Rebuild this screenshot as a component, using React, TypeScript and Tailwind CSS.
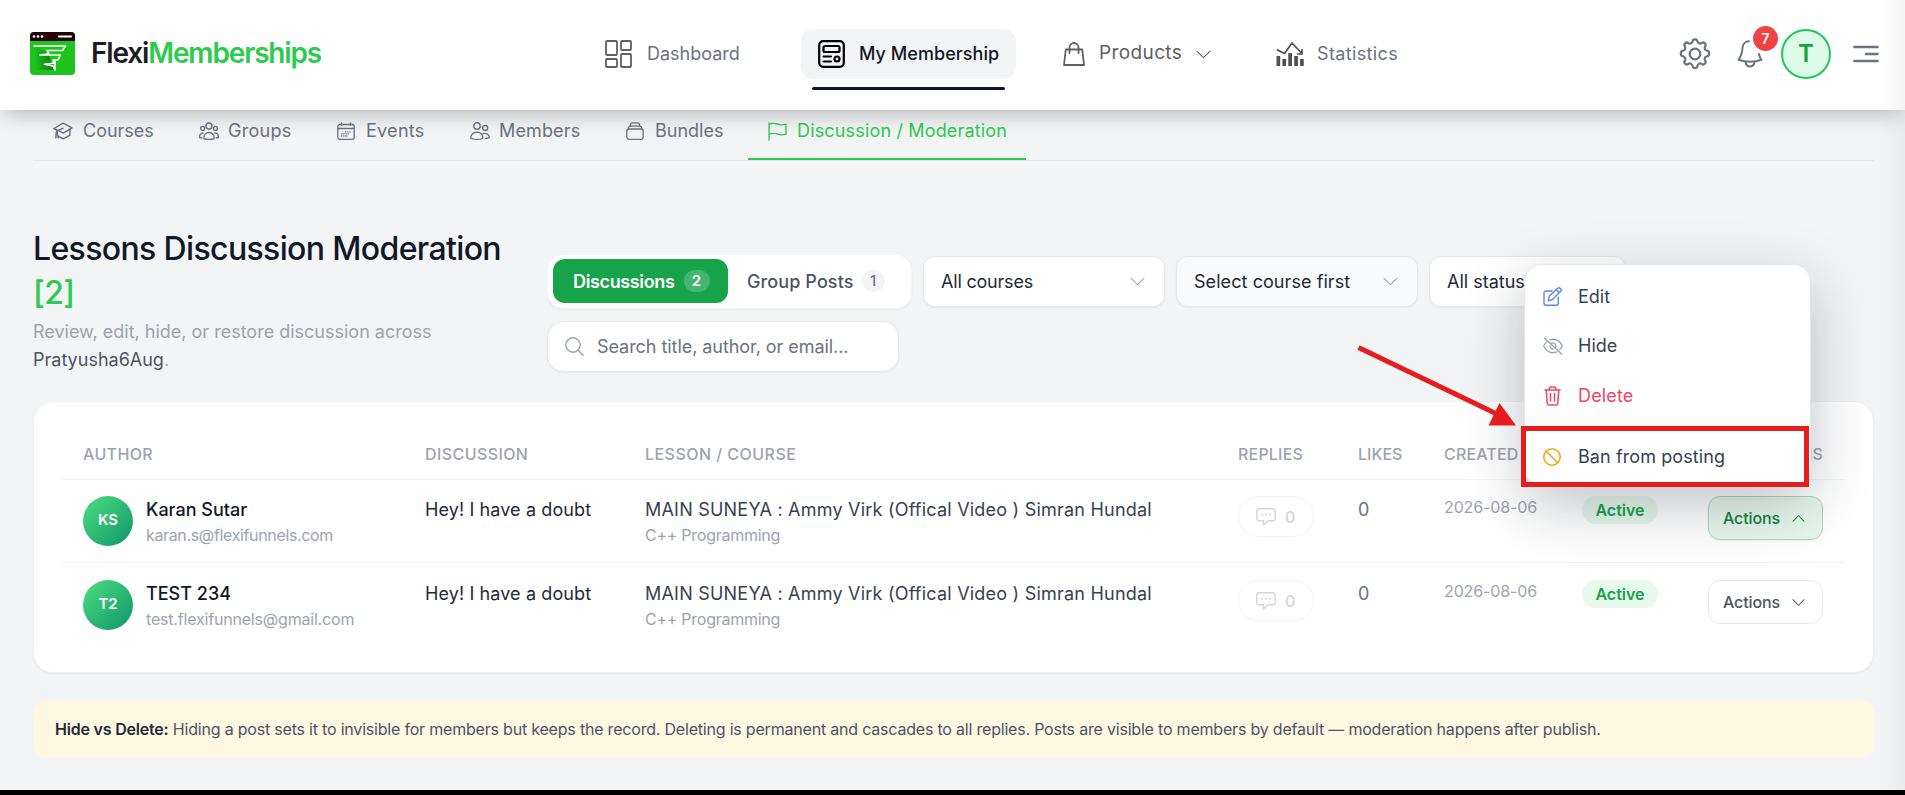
import React from "react";
import { BsChevronDown, BsChevronUp } from "react-icons/bs";

type IconProps = { className?: string };

const line = {
  fill: "none",
  stroke: "currentColor",
  strokeLinecap: "round" as const,
  strokeLinejoin: "round" as const,
};

function Logo() {
  return (
    <svg viewBox="0 0 45 43" className="h-[43px] w-[45px]">
      <defs>
        <linearGradient id="logoShade" x1="0" y1="0" x2="1" y2="0">
          <stop offset="0" stopColor="#1ec31e" />
          <stop offset="1" stopColor="#0b7a10" />
        </linearGradient>
      </defs>
      <rect width="45" height="43" rx="4" fill="#1ec31e" />
      <path d="M4 15l14 6 6 17H4z" fill="url(#logoShade)" />
      <path d="M0 9V4a4 4 0 0 1 4-4h37a4 4 0 0 1 4 4v5z" fill="#230309" />
      <circle cx="4" cy="4.500" r="1.300" fill="#fff" />
      <circle cx="8" cy="4.500" r="1.300" fill="#fff" />
      <circle cx="12" cy="4.500" r="1.300" fill="#fff" />
      <rect x="28" y="3.500" width="14" height="2" rx="1" fill="#fff" />
      <path
        d="M4 14h31.500l-3 4.500H17l1.800 3.300-9 1.200h20.500l-2.300 5h-5l1 3-9.500 1.300 8.500 1.700 2 4V29"
        fill="none"
        stroke="#fff"
        strokeWidth="1.600"
        strokeLinejoin="round"
        strokeLinecap="round"
      />
    </svg>
  );
}

function GridIcon({ className }: IconProps) {
  return (
    <svg viewBox="0 0 27 28" className={className} {...line} strokeWidth="1.800">
      <rect x="1" y="1" width="11" height="14" rx="1" />
      <rect x="16" y="1" width="10" height="9" rx="1" />
      <rect x="1" y="19" width="11" height="8" rx="1" />
      <rect x="16" y="14" width="10" height="13" rx="1" />
    </svg>
  );
}

function MembershipIcon({ className }: IconProps) {
  return (
    <svg viewBox="0 0 27 28" className={className} {...line} strokeWidth="2.200">
      <rect x="1.200" y="1.200" width="24.600" height="25.600" rx="4" />
      <rect x="5.500" y="6" width="16" height="6" rx="1.500" />
      <path d="M5.500 16.500h7.500M5.500 21.500h7.500" />
      <circle cx="19" cy="19" r="2.500" />
    </svg>
  );
}

function BagIcon({ className }: IconProps) {
  return (
    <svg viewBox="0 0 22 24" className={className} {...line} strokeWidth="1.800">
      <path d="M2.800 7.500h16.400L21 23H1z" />
      <path d="M6.500 11V5.500a4.500 4.500 0 0 1 9 0V11" />
    </svg>
  );
}

function StatsIcon({ className }: IconProps) {
  return (
    <svg viewBox="0 0 28 24" className={className}>
      <path d="M1.500 8l7 3.500L16 1l9.500 10M26 7.500V12h-4.500" {...line} strokeWidth="1.700" />
      <path d="M.5 14h3.700v10H.5zM6.400 17h3.700v7H6.400zM12.300 11H16v13h-3.700zM18.200 14h3.700v10h-3.700zM24.100 17h3.600v7h-3.600z" fill="currentColor" />
    </svg>
  );
}

function GearIcon({ className }: IconProps) {
  return (
    <svg viewBox="0 0 32 32" className={className} {...line} strokeWidth="2.200">
      <path d="M13.500 3.300c.2-1.300 1-2 2.500-2s2.300.7 2.500 2c.3 1.900 2.600 2.900 4.200 1.800 1.100-.8 2.200-.8 3.200.2s1 2.100.2 3.200c-1.100 1.600-.1 3.900 1.800 4.200 1.300.2 2.300 1.200 2.300 2.800s-1 2.600-2.300 2.800c-1.900.3-2.900 2.600-1.800 4.200.8 1.100.8 2.200-.2 3.200s-2.100 1-3.200.2c-1.600-1.100-3.900-.1-4.200 1.800-.2 1.300-1 2.500-2.500 2.500s-2.300-1.200-2.500-2.500c-.3-1.900-2.600-2.900-4.200-1.800-1.100.8-2.200.8-3.200-.2s-1-2.100-.2-3.200c1.100-1.600.1-3.900-1.800-4.200-1.300-.2-2.300-1.200-2.300-2.800s1-2.600 2.300-2.800c1.900-.3 2.900-2.600 1.800-4.200-.8-1.100-.8-2.200.2-3.200s2.100-1 3.200-.2c1.600 1.100 3.900.1 4.200-1.800z" />
      <circle cx="16" cy="16" r="5.300" />
    </svg>
  );
}

function BellIcon({ className }: IconProps) {
  return (
    <svg viewBox="0 0 26 28" className={className} {...line} strokeWidth="2">
      <path d="M12 1.200C8 1.200 5.700 4.500 5.500 8 5.200 13 4 16.500 1.500 19.800c7 2.400 16 2.400 23 0-1.200-1.600-2-3-2.600-5.800" />
      <path d="M8.500 22c.5 2.800 2.200 4.600 4.500 4.600s4-1.800 4.500-4.600" />
    </svg>
  );
}

function CoursesIcon({ className }: IconProps) {
  return (
    <svg viewBox="0 0 20 18" className={className} {...line} strokeWidth="1.400">
      <path d="M1 6.500L10 1.200l9 4.600-8.800 5.400L5 8.300l5-2" />
      <path d="M1 6.500l3 1.500c-.9 2.500-1.200 5-1.100 8M4.200 8.200v3.500l1 4M5 13.800l5.300 3 6.700-3.600V7.500" />
    </svg>
  );
}

function GroupsIcon({ className }: IconProps) {
  return (
    <svg viewBox="0 0 20 18" className={className} {...line} strokeWidth="1.400">
      <circle cx="10" cy="4" r="3" />
      <circle cx="3.600" cy="6.400" r="2" />
      <circle cx="16.400" cy="6.400" r="2" />
      <path d="M5 16.800c-.5-4 1.800-6.300 5-6.300s5.500 2.300 5 6.300c-3 .8-7 .8-10 0zM2.800 15.800H.8C.4 13 1.500 11 4.200 11M17.200 15.800h2c.4-2.800-.7-4.800-3.400-4.800" />
    </svg>
  );
}

function EventsIcon({ className }: IconProps) {
  return (
    <svg viewBox="0 0 18 18" className={className} {...line} strokeWidth="1.300">
      <rect x=".8" y="2.500" width="16.400" height="14.800" rx="2" />
      <path d="M.8 6.500h16.400M4.500.8v2.500M13.500.8v2.500" />
      <path d="M8 9.800h6M4 11.900h9M4 14h7" strokeDasharray="1.300 .9" strokeLinecap="butt" />
    </svg>
  );
}

function MembersIcon({ className }: IconProps) {
  return (
    <svg viewBox="0 0 20 18" className={className} {...line} strokeWidth="1.400">
      <circle cx="7" cy="4" r="3.200" />
      <circle cx="15.200" cy="6" r="2.500" />
      <path d="M1 16.300c-.6-3.600 2-6 6-6s6 2.400 5.700 6c-3 1.300-8.500 1.300-11.700 0zM13 11.600c3.400-.9 6.400.8 6.200 4-1.300.6-2.600.8-4 .8" />
    </svg>
  );
}

function BundlesIcon({ className }: IconProps) {
  return (
    <svg viewBox="0 0 18 18" className={className} {...line} strokeWidth="1.300">
      <rect x=".8" y="7" width="16.400" height="10.300" rx="2.500" />
      <path d="M2.200 6.800c0-1.700.8-2.600 2.300-2.600h9c1.500 0 2.300.9 2.300 2.600M4.300 4c0-2 .6-3.200 2-3.200h5.400c1.400 0 2 1.200 2 3.200" />
    </svg>
  );
}

function FlagIcon({ className }: IconProps) {
  return (
    <svg viewBox="0 0 19 19" className={className} {...line} strokeWidth="1.300">
      <path d="M1 18.300V1M1 2c3.500-1.300 6-.8 8.700.2 2.800 1 5.500.9 8.300 0v10c-2.800 1-5.500 1-8.300 0S4.500 11 1 12.200" />
    </svg>
  );
}

function SearchIcon({ className }: IconProps) {
  return (
    <svg viewBox="0 0 19 19" className={className} {...line} strokeWidth="1.400">
      <circle cx="8" cy="8" r="7.200" />
      <path d="M13.200 13.200L18.200 18.200" />
    </svg>
  );
}

function EditIcon({ className }: IconProps) {
  return (
    <svg viewBox="0 0 19 19" className={className} {...line} strokeWidth="1.400">
      <path d="M9 4H3a2 2 0 0 0-2 2v10.200a2 2 0 0 0 2 2h10.300a2 2 0 0 0 2-2v-6" />
      <path d="M6.200 9.300L14.700 1.300a1.700 1.700 0 0 1 2.500 0l.5.5a1.700 1.700 0 0 1 0 2.400L9.500 12.500l-4.300 1.300zM13.200 2.800l3 3" />
    </svg>
  );
}

function HideIcon({ className }: IconProps) {
  return (
    <svg viewBox="0 0 20 18" className={className} {...line} strokeWidth="1.300">
      <path d="M7 2.800C12.500 1.200 17 4 19.300 9c-.7 1.400-1.500 2.600-2.500 3.500M13.800 14.800C8.500 17 3 14.500.7 9c.8-1.900 2-3.500 3.500-4.600" />
      <path d="M8.800 6.200a3.100 3.100 0 0 1 4 4M10 12a3.100 3.100 0 0 1-3-3.400M1.500 1l17 16" />
    </svg>
  );
}

function TrashIcon({ className }: IconProps) {
  return (
    <svg viewBox="0 0 17 20" className={className} {...line} strokeWidth="1.500">
      <path d="M1 4h15M5 3.800C5 2 5.800 1 7.300 1h2.400C11.200 1 12 2 12 3.800M2.200 4.200l1 12.800a2 2 0 0 0 2 2h6.600a2 2 0 0 0 2-2l1-12.800M6.500 7.500v7.500M10.500 7.500v7.500" />
    </svg>
  );
}

function BanIcon({ className }: IconProps) {
  return (
    <svg viewBox="0 0 18 18" className={className} {...line} strokeWidth="1.500">
      <circle cx="9" cy="9" r="8.200" />
      <path d="M3.200 3.200l11.600 11.600" />
    </svg>
  );
}

function CommentIcon({ className }: IconProps) {
  return (
    <svg viewBox="0 0 20 18" className={className} {...line} strokeWidth="1.400">
      <path d="M3 .8h14a2.200 2.200 0 0 1 2.200 2.200v7.500a2.200 2.200 0 0 1-2.200 2.200h-4.800L7.500 17v-4.300H3A2.200 2.200 0 0 1 .8 10.500V3A2.200 2.200 0 0 1 3 .8z" />
      <path d="M6.300 6.800h.1M10 6.800h.1M13.700 6.800h.1" strokeWidth="1.900" />
    </svg>
  );
}

function Header() {
  return (
    <header className="relative z-10 flex h-[110px] items-start bg-white shadow-[0_8px_20px_-4px_rgba(0,0,0,0.25)]">
      <div className="flex w-[605px] items-center pt-8 pl-[30px]">
        <Logo />
        <div className="ml-[16px] text-[28px] leading-[43px] font-semibold tracking-[-0.041em] text-[#1b1b27]">
          Flexi<span className="text-[#2bcb4e]">Memberships</span>
        </div>
      </div>
      <nav className="flex h-[50px] translate-y-[29px] items-center">
        <div className="flex w-[196px] items-center">
          <GridIcon className="h-7 w-[27px] text-[#606060]" />
          <span className="ml-[15px] pb-0.5 text-[18px] text-[#6b7280]">Dashboard</span>
        </div>
        <div className="relative flex h-[50px] w-[215px] items-center rounded-xl bg-[#f3f4f6] pl-[17px]">
          <MembershipIcon className="h-7 w-[27px] text-black" />
          <span className="ml-[14px] pb-px text-[18px] font-medium tracking-[0.003em] text-[#111827]">My Membership</span>
          <span className="absolute -bottom-[11px] left-[11px] h-[3px] w-[193px] rounded-full bg-[#0f172a]" />
        </div>
        <div className="ml-[47px] flex w-[213px] items-center text-[#606060]">
          <BagIcon className="h-6 w-[22px]" />
          <span className="ml-[14px] pb-px text-[19px] tracking-[0.02em]">Products</span>
          <BsChevronDown className="ml-[13px] size-[17px]" />
        </div>
        <div className="flex items-center">
          <StatsIcon className="h-6 w-7 text-[#505050]" />
          <span className="ml-[13px] pb-0.5 text-[18px] tracking-[0.02em] text-[#6b7280]">Statistics</span>
        </div>
      </nav>
      <div className="ml-auto flex h-[50px] w-[226px] translate-y-[29px] items-center text-[#6b7280]">
        <GearIcon className="size-8" />
        <div className="relative ml-[26px]">
          <BellIcon className="h-7 w-[26px]" />
          <span className="absolute -top-[14px] left-4 flex size-[25px] items-center justify-center rounded-full bg-[#ef4444] text-sm font-semibold text-white">
            7
          </span>
        </div>
        <div className="ml-[18px] flex size-[50px] items-center justify-center rounded-full border-2 border-[#22c55e] bg-[#dcfce7] text-[24px] font-semibold text-[#16a34a]">
          T
        </div>
        <svg viewBox="0 0 26 18" className="ml-[22px] h-[18px] w-[26px]" {...line} strokeWidth="2.600">
          <path d="M1.500 2h23M13 9h11.500M1.500 16h23" />
        </svg>
      </div>
    </header>
  );
}

function Tabs() {
  return (
    <div className="mr-[31px] ml-[33px] flex h-[51px] border-b border-[#e5e7eb] pl-5 text-[18px] text-[#6b7280]">
      <div className="flex w-[146px] items-center pb-2">
        <CoursesIcon className="h-[18px] w-5" />
        <span className="ml-[10px] pb-0.5">Courses</span>
      </div>
      <div className="flex w-[138px] items-center pb-2">
        <GroupsIcon className="h-[18px] w-5" />
        <span className="ml-[9px] pb-0.5 tracking-[0.015em]">Groups</span>
      </div>
      <div className="flex w-[133px] items-center pb-2">
        <EventsIcon className="size-[18px]" />
        <span className="ml-[11px] pb-0.5 tracking-[0.015em]">Events</span>
      </div>
      <div className="flex w-[156px] items-center pb-2">
        <MembersIcon className="h-[18px] w-5" />
        <span className="ml-[9px] pb-0.5 tracking-[0.008em]">Members</span>
      </div>
      <div className="flex w-[122px] items-center pb-2">
        <BundlesIcon className="size-[18px]" />
        <span className="ml-[11px] pb-0.5">Bundles</span>
      </div>
      <div className="flex w-[278px] items-center border-b-2 border-[#2bcb4e] pb-[6px] pl-5 text-[#2bcb4e]">
        <FlagIcon className="size-[19px]" />
        <span className="ml-[10px] pb-0.5 tracking-[0.009em]">Discussion / Moderation</span>
      </div>
    </div>
  );
}

function Select({ label, box }: { label: string; box: string }) {
  return (
    <div className={`flex h-[51px] items-center justify-between rounded-xl border border-[#e5e7eb] pr-[18px] pl-[17px] text-[18px] text-[#1f2937] shadow-xs ${box}`}>
      <span className="pb-px">{label}</span>
      <BsChevronDown className="size-[17px] text-[#9ca3af]" />
    </div>
  );
}

function Toolbar() {
  return (
    <div className="flex pt-[65px] pl-[33px]">
      <div className="w-[514px]">
        <h1 className="max-w-[490px] pt-px text-[32px] leading-[44px] font-medium tracking-[-0.02em] text-[#111827]">
          Lessons Discussion Moderation <span className="text-[#2bcb4e]">[2]</span>
        </h1>
        <p className="mt-[3px] max-w-[420px] text-[18px] leading-7 text-[#9ca3af]">
          Review, edit, hide, or restore discussion across <span className="text-[#4b5563]">Pratyusha6Aug</span>.
        </p>
      </div>
      <div className="flex w-[1325px] flex-wrap content-start items-center gap-x-[11px] gap-y-3 pt-7">
        <div className="flex h-[55px] w-[365px] items-start rounded-2xl border border-[#f3f4f6] bg-white pt-1 pl-[5px] shadow-xs">
          <div className="flex h-[44px] w-[175px] items-center rounded-xl bg-[#16a34a] pl-5 text-white">
            <span className="text-[18px] font-semibold tracking-[-0.02em]">Discussions</span>
            <span className="ml-[9px] flex h-[22px] w-[26px] items-center justify-center rounded-full bg-white/20 text-[15px] font-semibold">2</span>
          </div>
          <div className="flex h-[44px] items-center">
            <span className="ml-[19px] text-[18px] font-medium tracking-[0.006em] text-[#4b5563]">Group Posts</span>
            <span className="ml-2 flex h-[22px] w-[23px] items-center justify-center rounded-full bg-[#f3f4f6] text-[15px] font-medium text-[#6b7280]">1</span>
          </div>
        </div>
        <Select label="All courses" box="w-[242px] bg-white tracking-[-0.011em]" />
        <Select label="Select course first" box="w-[242px] bg-[#f9fafb] tracking-[0.004em]" />
        <Select label="All status" box="w-[197px] bg-white" />
        <div className="flex h-[51px] w-[352px] items-center rounded-2xl border border-[#e5e7eb] bg-white pl-[17px] shadow-xs">
          <SearchIcon className="size-[19px] text-[#9ca3af]" />
          <span className="ml-[13px] text-[18px] tracking-[-0.003em] text-[#6b7280]">Search title, author, or email...</span>
        </div>
      </div>
    </div>
  );
}

const columns = "grid grid-cols-[342px_220px_593px_120px_86px_138px_126px_115px] pl-[21px]";

type Row = { initials: string; name: string; email: string; emailTracking: string; open: boolean };

const rows: Row[] = [
  { initials: "KS", name: "Karan Sutar", email: "karan.s@flexifunnels.com", emailTracking: "tracking-[-0.022em]", open: true },
  { initials: "T2", name: "TEST 234", email: "test.flexifunnels@gmail.com", emailTracking: "tracking-[-0.012em]", open: false },
];

function TableRow({ row }: { row: Row }) {
  return (
    <div className={`${columns} ${row.open ? "h-[83px] border-b border-[#f3f4f6] pt-4" : "pt-[17px]"}`}>
      <div className="flex">
        <div className="flex size-[50px] items-center justify-center rounded-full bg-linear-to-br from-[#4ade80] to-[#059669] pb-0.5 text-[15px] font-semibold text-white">
          {row.initials}
        </div>
        <div className="ml-[13px]">
          <div className="text-[18px] leading-[27px] font-medium text-[#111827]">{row.name}</div>
          <div className={`text-[16px] leading-6 text-[#9ca3af] ${row.emailTracking}`}>{row.email}</div>
        </div>
      </div>
      <div className="text-[18px] leading-[27px] tracking-[0.006em] text-[#1f2937]">Hey! I have a doubt</div>
      <div>
        <div className="text-[18px] leading-[27px] tracking-[0.012em] text-[#374151]">
          MAIN SUNEYA : Ammy Virk (Offical Video ) Simran Hundal
        </div>
        <div className="text-[16px] leading-6 tracking-[-0.016em] text-[#9ca3af]">C++ Programming</div>
      </div>
      <div>
        <div className="flex h-[41px] w-[76px] items-center rounded-full border border-[#f3f4f6] pl-[17px] text-[#d1d5db]">
          <CommentIcon className="h-[18px] w-5" />
          <span className="ml-[9px] text-[16px] font-medium">0</span>
        </div>
      </div>
      <div className="text-[18px] leading-[27px] text-[#6b7280]">0</div>
      <div className="text-[16px] leading-[23px] tracking-[-0.008em] text-[#9ca3af]">2026-08-06</div>
      <div>
        <div className="flex h-7 w-[76px] items-center justify-center rounded-full bg-[#e6f9ec] text-[16px] font-semibold text-[#16a34a]">
          Active
        </div>
      </div>
      <div
        className={`flex h-[44px] items-center rounded-xl border pl-[14px] text-[16px] font-medium ${
          row.open ? "border-[#a3dcb8] bg-[#e8f8ee] text-[#15803d] shadow-xs" : "border-[#e5e7eb] bg-white text-[#4b5563]"
        }`}
      >
        <span className="tracking-[-0.008em]">Actions</span>
        {row.open ? <BsChevronUp className="ml-[11px] size-[15px]" /> : <BsChevronDown className="ml-[11px] size-[15px]" />}
      </div>
    </div>
  );
}

function Table() {
  return (
    <section className="mt-[27px] mr-[31px] ml-[33px] h-[272px] rounded-[20px] border border-[#eff0f2] bg-white px-7 pt-10 shadow-xs">
      <div className={`${columns} h-[38px] border-b border-[#f3f4f6] text-[16px] leading-6 font-medium text-[#9ca3af]`}>
        <span className="tracking-[0.022em]">AUTHOR</span>
        <span className="tracking-[0.026em]">DISCUSSION</span>
        <span className="tracking-[0.029em]">LESSON / COURSE</span>
        <span className="tracking-[0.012em]">REPLIES</span>
        <span>LIKES</span>
        <span className="tracking-[0.01em]">CREATED</span>
        <span />
        <span className="text-right tracking-[0.01em]">ACTIONS</span>
      </div>
      {rows.map((row) => (
        <TableRow key={row.name} row={row} />
      ))}
    </section>
  );
}

function ActionsMenu() {
  return (
    <div className="absolute top-[264px] left-[1524px] z-20 h-[222px] w-[287px] rounded-[18px] border border-[#e5e7eb] bg-white text-[18px] text-[#374151] shadow-[0_20px_60px_rgba(17,24,39,0.26)]">
      <div className="flex h-[50px] items-center pt-[13px] pl-[18px]">
        <EditIcon className="size-[19px] text-[#5b86e5]" />
        <span className="ml-[16px] pb-px">Edit</span>
      </div>
      <div className="flex h-[50px] items-center pt-[12px] pl-[18px]">
        <HideIcon className="h-[18px] w-5 text-[#9ca3af]" />
        <span className="ml-[15px] pb-px">Hide</span>
      </div>
      <div className="flex h-[50px] items-center pt-[11px] pl-[19px] text-[#ee4468]">
        <TrashIcon className="h-5 w-[17px]" />
        <span className="ml-[17px] pb-px tracking-[0.009em]">Delete</span>
      </div>
      <div className="mt-3 flex h-[50px] items-center border-t border-[#f3f4f6] pt-[9px] pl-[18px]">
        <BanIcon className="size-[18px] text-[#f0a50f]" />
        <span className="ml-[17px] pb-px tracking-[0.005em]">Ban from posting</span>
      </div>
    </div>
  );
}

function Callout() {
  return (
    <>
      <div className="absolute top-[426px] left-[1521px] z-30 h-[61px] w-[288px] border-[5px] border-[#e71d1d]" />
      <svg viewBox="0 0 165 85" className="absolute top-[344px] left-[1355px] z-30 h-[85px] w-[165px]">
        <path d="M3.500 3.500L144 71" stroke="#e71d1d" strokeWidth="5" />
        <path d="M144.500 59L161 81.500H133.500z" fill="#e71d1d" />
      </svg>
    </>
  );
}

export default function App() {
  return (
    <div className="relative h-[795px] w-full overflow-hidden border-b-[5px] border-black bg-[#f3f4f6] font-['Inter',sans-serif]">
      <Header />
      <Tabs />
      <Toolbar />
      <Table />
      <div className="mt-7 mr-[31px] ml-[33px] flex h-[56px] items-center rounded-xl bg-[#fef8e3] pl-[22px] text-[16px] tracking-[-0.0125em] text-[#4b5563]">
        <p>
          <b className="font-semibold text-[#1f2937]">Hide vs Delete:</b> Hiding a post sets it to invisible for members but keeps the record. Deleting is
          permanent and cascades to all replies. Posts are visible to members by default — moderation happens after publish.
        </p>
      </div>
      <ActionsMenu />
      <Callout />
      <div className="pointer-events-none absolute top-0 right-0 z-40 h-full w-6 bg-linear-to-r from-black/0 to-black/4" />
    </div>
  );
}
